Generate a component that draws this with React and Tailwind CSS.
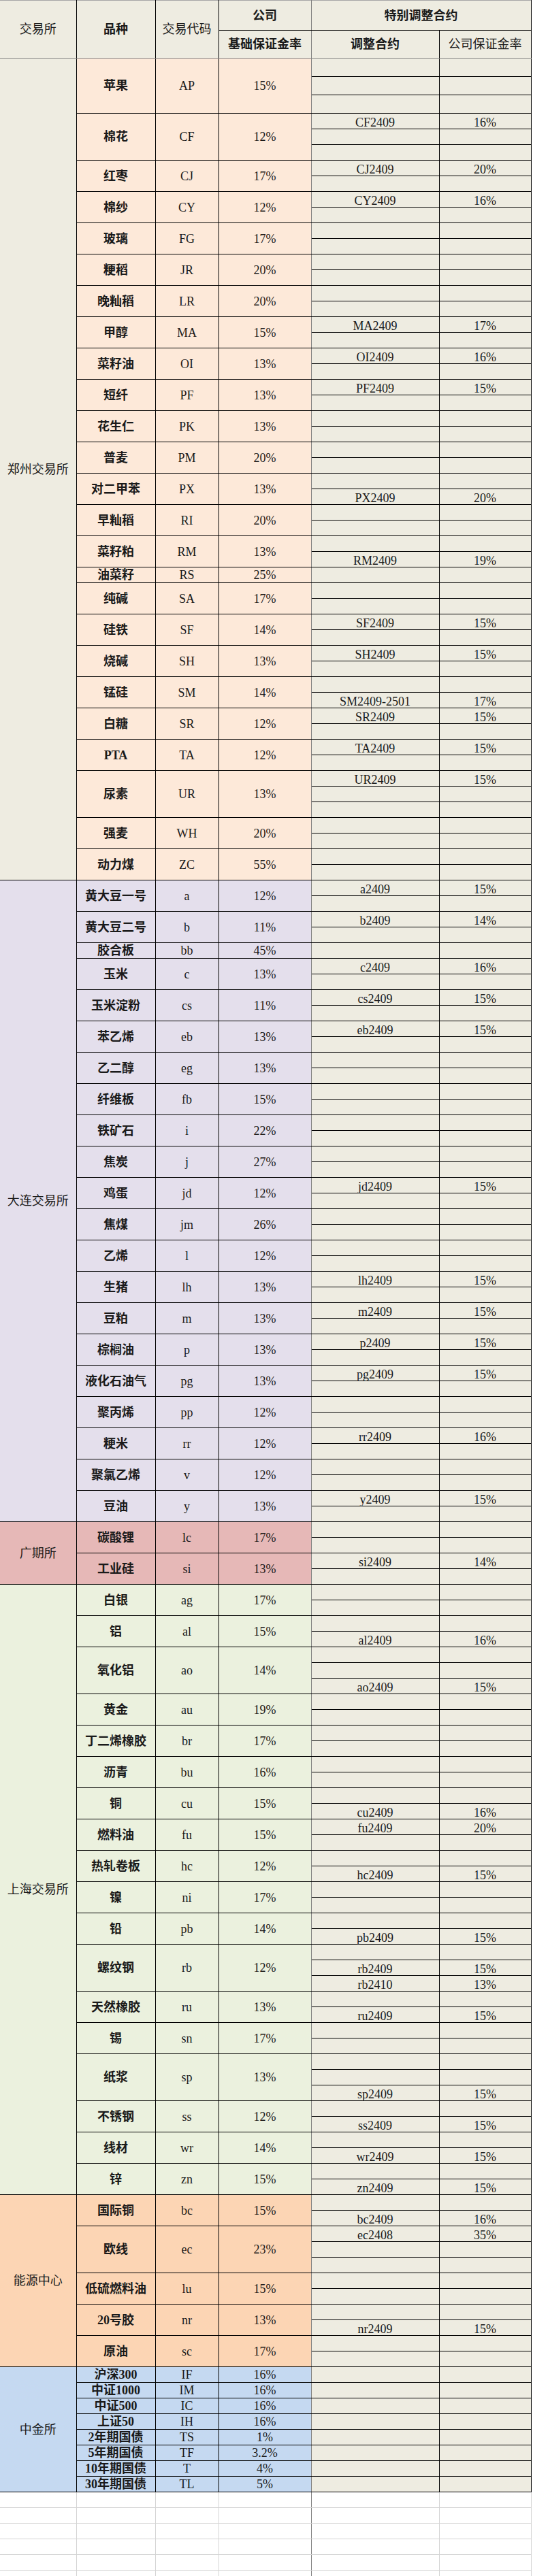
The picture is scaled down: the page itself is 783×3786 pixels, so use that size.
const zhengzhou = [
    ['苹果', 'AP', '15%', [null, null, null]],
    ['棉花', 'CF', '12%', [['CF2409', '16%'], null, null]],
    ['红枣', 'CJ', '17%', [['CJ2409', '20%'], null]],
    ['棉纱', 'CY', '12%', [['CY2409', '16%'], null]],
    ['玻璃', 'FG', '17%', [null, null]],
    ['粳稻', 'JR', '20%', [null, null]],
    ['晚籼稻', 'LR', '20%', [null, null]],
    ['甲醇', 'MA', '15%', [['MA2409', '17%'], null]],
    ['菜籽油', 'OI', '13%', [['OI2409', '16%'], null]],
    ['短纤', 'PF', '13%', [['PF2409', '15%'], null]],
    ['花生仁', 'PK', '13%', [null, null]],
    ['普麦', 'PM', '20%', [null, null]],
    ['对二甲苯', 'PX', '13%', [null, ['PX2409', '20%']]],
    ['早籼稻', 'RI', '20%', [null, null]],
    ['菜籽粕', 'RM', '13%', [null, ['RM2409', '19%']]],
    ['油菜籽', 'RS', '25%', [null]],
    ['纯碱', 'SA', '17%', [null, null]],
    ['硅铁', 'SF', '14%', [['SF2409', '15%'], null]],
    ['烧碱', 'SH', '13%', [['SH2409', '15%'], null]],
    ['锰硅', 'SM', '14%', [null, ['SM2409-2501', '17%']]],
    ['白糖', 'SR', '12%', [['SR2409', '15%'], null]],
    ['PTA', 'TA', '12%', [['TA2409', '15%'], null]],
    ['尿素', 'UR', '13%', [['UR2409', '15%'], null, null]],
    ['强麦', 'WH', '20%', [null, null]],
    ['动力煤', 'ZC', '55%', [null, null]],
]

const dalian = [
    ['黄大豆一号', 'a', '12%', [['a2409', '15%'], null]],
    ['黄大豆二号', 'b', '11%', [['b2409', '14%'], null]],
    ['胶合板', 'bb', '45%', [null]],
    ['玉米', 'c', '13%', [['c2409', '16%'], null]],
    ['玉米淀粉', 'cs', '11%', [['cs2409', '15%'], null]],
    ['苯乙烯', 'eb', '13%', [['eb2409', '15%'], null]],
    ['乙二醇', 'eg', '13%', [null, null]],
    ['纤维板', 'fb', '15%', [null, null]],
    ['铁矿石', 'i', '22%', [null, null]],
    ['焦炭', 'j', '27%', [null, null]],
    ['鸡蛋', 'jd', '12%', [['jd2409', '15%'], null]],
    ['焦煤', 'jm', '26%', [null, null]],
    ['乙烯', 'l', '12%', [null, null]],
    ['生猪', 'lh', '13%', [['lh2409', '15%'], null]],
    ['豆粕', 'm', '13%', [['m2409', '15%'], null]],
    ['棕榈油', 'p', '13%', [['p2409', '15%'], null]],
    ['液化石油气', 'pg', '13%', [['pg2409', '15%'], null]],
    ['聚丙烯', 'pp', '12%', [null, null]],
    ['粳米', 'rr', '12%', [['rr2409', '16%'], null]],
    ['聚氯乙烯', 'v', '12%', [null, null]],
    ['豆油', 'y', '13%', [['y2409', '15%'], null]],
]

const guangzhou = [
    ['碳酸锂', 'lc', '17%', [null, null]],
    ['工业硅', 'si', '13%', [['si2409', '14%'], null]],
]

const shanghai = [
    ['白银', 'ag', '17%', [null, null]],
    ['铝', 'al', '15%', [null, ['al2409', '16%']]],
    ['氧化铝', 'ao', '14%', [null, null, ['ao2409', '15%']]],
    ['黄金', 'au', '19%', [null, null]],
    ['丁二烯橡胶', 'br', '17%', [null, null]],
    ['沥青', 'bu', '16%', [null, null]],
    ['铜', 'cu', '15%', [null, ['cu2409', '16%']]],
    ['燃料油', 'fu', '15%', [['fu2409', '20%'], null]],
    ['热轧卷板', 'hc', '12%', [null, ['hc2409', '15%']]],
    ['镍', 'ni', '17%', [null, null]],
    ['铅', 'pb', '14%', [null, ['pb2409', '15%']]],
    ['螺纹钢', 'rb', '12%', [null, ['rb2409', '15%'], ['rb2410', '13%']]],
    ['天然橡胶', 'ru', '13%', [null, ['ru2409', '15%']]],
    ['锡', 'sn', '17%', [null, null]],
    ['纸浆', 'sp', '13%', [null, null, ['sp2409', '15%']]],
    ['不锈钢', 'ss', '12%', [null, ['ss2409', '15%']]],
    ['线材', 'wr', '14%', [null, ['wr2409', '15%']]],
    ['锌', 'zn', '15%', [null, ['zn2409', '15%']]],
]

const energy = [
    ['国际铜', 'bc', '15%', [null, ['bc2409', '16%']]],
    ['欧线', 'ec', '23%', [['ec2408', '35%'], null, null]],
    ['低硫燃料油', 'lu', '15%', [null, null]],
    ['20号胶', 'nr', '13%', [null, ['nr2409', '15%']]],
    ['原油', 'sc', '17%', [null, null]],
]

const cffex = [
    ['沪深300', 'IF', '16%', [null]],
    ['中证1000', 'IM', '16%', [null]],
    ['中证500', 'IC', '16%', [null]],
    ['上证50', 'IH', '16%', [null]],
    ['2年期国债', 'TS', '1%', [null]],
    ['5年期国债', 'TF', '3.2%', [null]],
    ['10年期国债', 'T', '4%', [null]],
    ['30年期国债', 'TL', '5%', [null]],
]

const sections = [
    { name: '郑州交易所', nameBg: 'bg-[#eeece1]', bg: 'bg-[#fde9d9]', items: zhengzhou },
    { name: '大连交易所', nameBg: 'bg-[#e4dfec]', bg: 'bg-[#e4dfec]', items: dalian },
    { name: '广期所', nameBg: 'bg-[#e6b8b7]', bg: 'bg-[#e6b8b7]', items: guangzhou },
    { name: '上海交易所', nameBg: 'bg-[#ebf1de]', bg: 'bg-[#ebf1de]', items: shanghai },
    { name: '能源中心', nameBg: 'bg-[#fcd5b4]', bg: 'bg-[#fcd5b4]', items: energy },
    { name: '中金所', nameBg: 'bg-[#c5d9f1]', bg: 'bg-[#c5d9f1]', items: cffex },
]

const line = 'border-r border-b border-black'
const midLine = 'border-r border-b border-b-black border-r-[#7f7f7f]'
const grid = 'bg-white border-r border-b border-[#d4d4d4]'

function App() {
    const rows = []
    sections.forEach((sec, si) => {
        const total = sec.items.reduce((n, it) => n + it[3].length, 0)
        sec.items.forEach((it, ii) => {
            const [name, code, rate, subs] = it
            subs.forEach((sub, k) => {
                const tall = si === 0 && ii === 0
                rows.push(
                    <tr key={`${si}-${ii}-${k}`} className={tall ? 'h-[27px]' : 'h-[23px]'}>
                        {ii === 0 && k === 0 && (
                            <td rowSpan={total} className={`${sec.nameBg} ${line}`}>{sec.name}</td>
                        )}
                        {k === 0 && (
                            <>
                                <td rowSpan={subs.length} className={`${sec.bg} ${line} font-bold`}>{name}</td>
                                <td rowSpan={subs.length} className={`${sec.bg} ${line}`}>{code}</td>
                                <td rowSpan={subs.length} className={`${sec.bg} ${midLine}`}>{rate}</td>
                            </>
                        )}
                        <td className={`bg-[#eeece1] ${line} align-bottom`}>{sub ? sub[0] : ''}</td>
                        <td className={`bg-[#eeece1] ${line} align-bottom`}>{sub ? sub[1] : ''}</td>
                    </tr>
                )
            })
        })
    })

    const blanks = [0, 1, 2, 3, 4]

    return (
        <div className="w-[783px] bg-white">
            <table className="table-fixed w-[780px] text-center text-[18px] leading-[18px] text-[#1a1a1a] font-['Liberation_Serif','Noto_Sans_CJK_SC',serif]">
                <colgroup>
                    <col className="w-[112px]" />
                    <col className="w-[116px]" />
                    <col className="w-[93px]" />
                    <col className="w-[136px]" />
                    <col className="w-[188px]" />
                    <col className="w-[135px]" />
                </colgroup>
                <thead>
                    <tr className="h-[44px]">
                        <th rowSpan={2} className="bg-[#eeece1] border-t border-r border-b border-t-[#a6a6a6] border-r-black border-b-[#808080] font-normal">交易所</th>
                        <th rowSpan={2} className="bg-[#eeece1] border-t border-r border-b border-t-[#a6a6a6] border-r-black border-b-[#808080] font-bold">品种</th>
                        <th rowSpan={2} className="bg-[#eeece1] border-t border-r border-b border-t-[#a6a6a6] border-r-black border-b-[#808080] font-normal">交易代码</th>
                        <th className="bg-[#eeece1] border-t border-r border-b border-t-[#a6a6a6] border-r-[#7f7f7f] border-b-black font-bold">公司</th>
                        <th colSpan={2} className="bg-[#eeece1] border-t border-r border-b border-t-[#a6a6a6] border-r-black border-b-black font-bold">特别调整合约</th>
                    </tr>
                    <tr className="h-[41px]">
                        <th className="bg-[#eeece1] border-r border-b border-r-[#7f7f7f] border-b-[#808080] font-bold">基础保证金率</th>
                        <th className="bg-[#eeece1] border-r border-b border-r-black border-b-[#808080] font-bold">调整合约</th>
                        <th className="bg-[#eeece1] border-r border-b border-r-black border-b-[#808080] font-normal">公司保证金率</th>
                    </tr>
                </thead>
                <tbody>
                    {rows}
                    {blanks.map((b) => (
                        <tr key={`blank-${b}`} className="h-[23px]">
                            <td className={grid}></td>
                            <td className={grid}></td>
                            <td className={grid}></td>
                            <td className="bg-white border-r border-b border-r-[#7f7f7f] border-b-[#d4d4d4]"></td>
                            <td className={grid}></td>
                            <td className={grid}></td>
                        </tr>
                    ))}
                    <tr className="h-[8px]">
                        <td className="border-r border-[#d4d4d4]"></td>
                        <td className="border-r border-[#d4d4d4]"></td>
                        <td className="border-r border-[#d4d4d4]"></td>
                        <td className="border-r border-[#7f7f7f]"></td>
                        <td className="border-r border-[#d4d4d4]"></td>
                        <td className="border-r border-[#d4d4d4]"></td>
                    </tr>
                </tbody>
            </table>
            <div className="flex h-[3px] border-t border-[#9a9a9a] bg-[#ececec]">
                <div className="w-[35px] bg-[#bdbdbd]"></div>
                <div className="w-[68px] bg-white border-x border-[#9a9a9a]"></div>
                <div className="w-[58px] border-r border-[#9a9a9a]"></div>
                <div className="w-[59px] border-r border-[#9a9a9a]"></div>
                <div className="w-[32px] border-r border-[#9a9a9a]"></div>
            </div>
        </div>
    )
}

export default App
